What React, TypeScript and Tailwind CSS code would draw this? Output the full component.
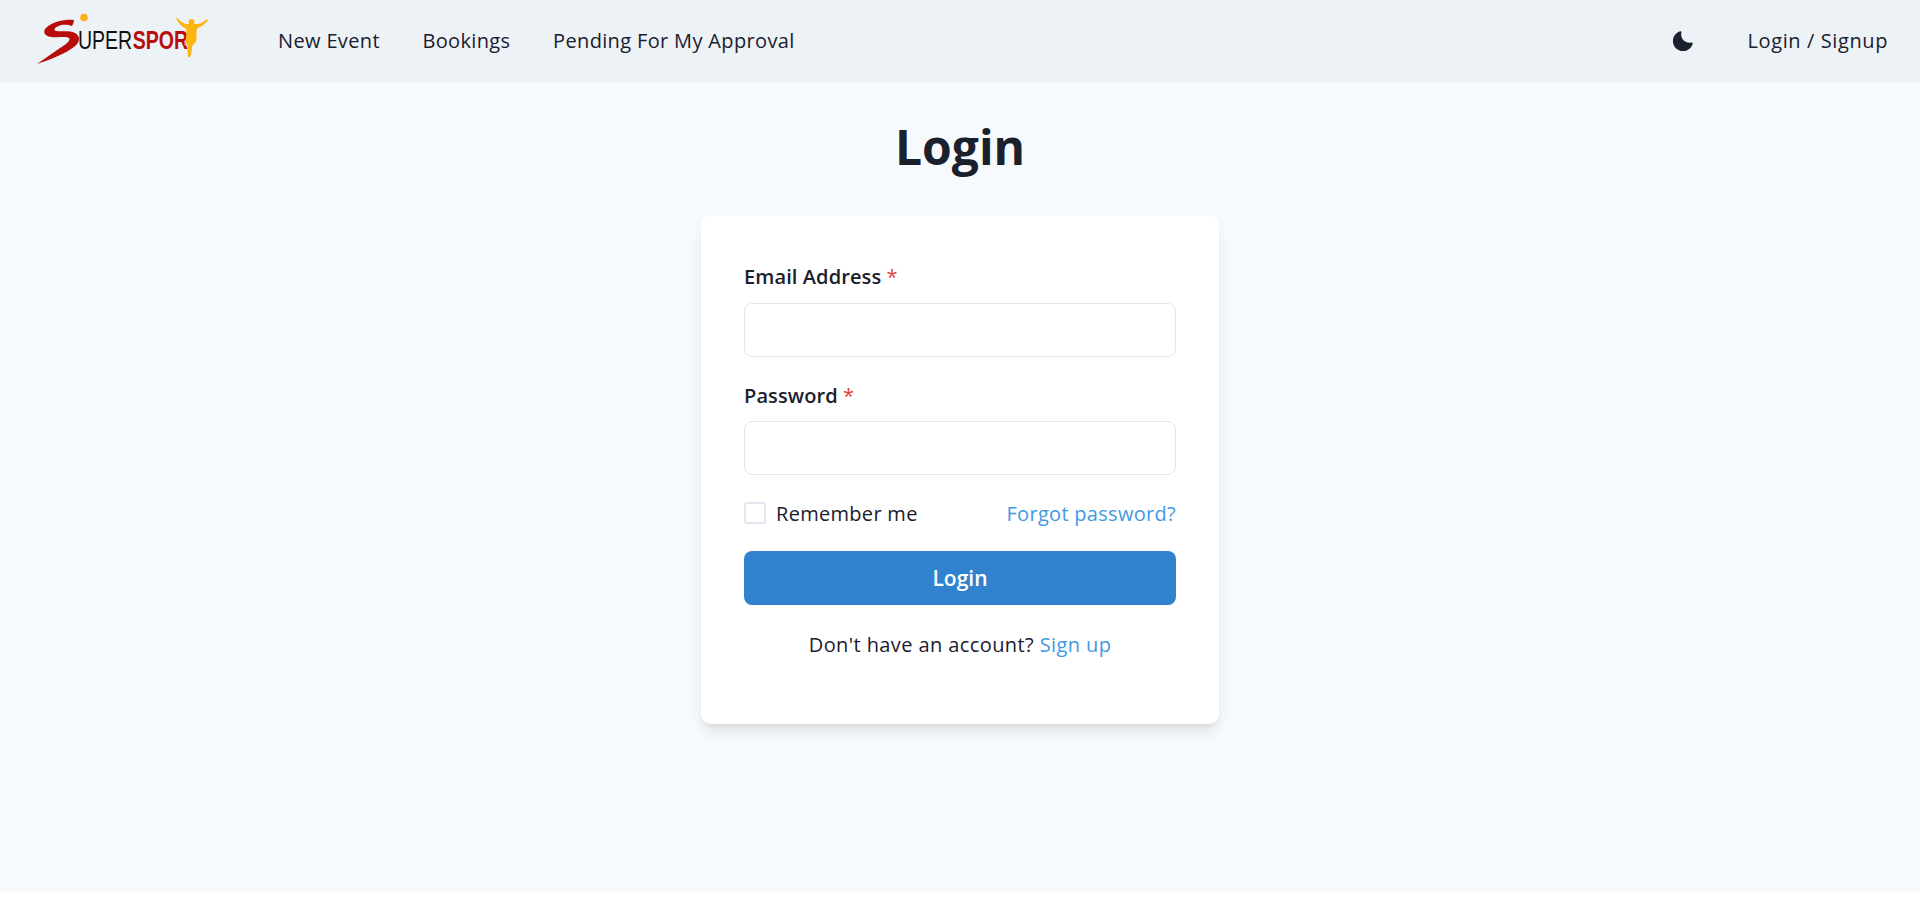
import React from 'react';

const navLinks = ['New Event', 'Bookings', 'Pending For My Approval'];

const Logo = () => (
  <svg width="212" height="82" viewBox="0 0 212 82" className="block shrink-0">
    <circle cx="84" cy="17.5" r="3.8" fill="#fbb116" />
    <path
      d="M74 20 C66 19 54 21 47 27 C42 31 44 36 51 37 C58 38 66 36 69 38 C71 40 67 44 60 48 L37 64 C50 60 66 53 74 47 C80 43 81 36 75 33 C69 30 60 32 56 31 C53 30 55 27 59 26 C63 24 68 25 72 26 C73 24 74 22 74 20 Z"
      fill="#b80d0d"
    />
    <g transform="translate(78 48.5) scale(0.75 1)" fontSize="26" fontFamily="'Liberation Sans', sans-serif">
      <text x="0" y="0" fill="#111111">UPER</text>
      <text x="73" y="0" fontWeight="700" fill="#b80d0d">SPOR</text>
    </g>
    <circle cx="191.5" cy="22" r="3" fill="#fdb50f" />
    <path
      d="M176 18 L178 18.5 C180 21 184 24 187 24 L196 24 C200 24 204 22 207 19 L208 20.5 C205 24 201 27 197 28.5 C196 33 197 38 196 42 C194 43 193 45 192 47 C192 51 191 55 190 57 L188 57 C187 52 188 47 187 43 C186 44 185 45 184 46 C186 39 187 33 186 28.5 C182 27 178 23 176 18 Z"
      fill="#fdb50f"
    />
  </svg>
);

const MoonIcon = () => (
  <svg viewBox="0 0 24 24" className="w-[22px] h-[22px] text-[#1a202c]">
    <path
      fill="currentColor"
      d="M21.4,13.7C20.6,13.9,19.8,14,19,14c-5,0-9-4-9-9c0-0.8,0.1-1.6,0.3-2.4c0.1-0.3,0-0.7-0.3-1 c-0.3-0.3-0.6-0.4-1-0.3C4.3,2.7,1,7.1,1,12c0,6.1,4.9,11,11,11c4.9,0,9.3-3.3,10.6-8.1c0.1-0.3,0-0.7-0.3-1 C22.1,13.7,21.7,13.6,21.4,13.7z"
    />
  </svg>
);

const Field = ({ label, type, className }: { label: string; type: string; className: string }) => (
  <div className={className}>
    <label className="block h-[30px] text-[20px] leading-[30px] tracking-[0.1px] font-[550] text-[#1a202c]">
      {label} <span className="font-medium text-[#e53e3e]">*</span>
    </label>
    <input
      type={type}
      className="block w-full h-[54px] rounded-lg border border-[#e2e8f0] bg-white px-4 outline-none"
    />
  </div>
);

export default function App() {
  return (
    <div className="bg-white font-['Open_Sans',sans-serif] text-[#1a202c]">
      <div className="h-[892px] bg-[#f7fafc]">
        <nav className="h-[82px] bg-[#edf2f7] flex items-center pr-[32px]">
          <Logo />
          <div className="flex items-center gap-[42.6px] ml-[66px] text-[20px] tracking-[0.35px]">
            {navLinks.map((label) => (
              <a key={label} href="#" className="whitespace-nowrap">
                {label}
              </a>
            ))}
          </div>
          <div className="ml-auto flex items-center gap-[54px] text-[20px] tracking-[0.6px]">
            <MoonIcon />
            <a href="#" className="whitespace-nowrap">Login / Signup</a>
          </div>
        </nav>

        <main className="flex flex-col items-center">
          <h1 className="mt-[29px] mb-[33px] h-[72px] text-[48px] leading-[72px] font-bold">Login</h1>
          <div className="w-[518px] h-[508px] rounded-[10px] bg-white px-[43px] pt-[46px] shadow-[0_10px_15px_-3px_rgba(0,0,0,0.1),0_4px_6px_-2px_rgba(0,0,0,0.05)]">
            <Field label="Email Address" type="email" className="flex flex-col gap-[11px]" />
            <Field label="Password" type="password" className="mt-[24px] flex flex-col gap-[10px]" />

            <div className="mt-[23px] h-[30px] flex items-center justify-between text-[20px] tracking-[0.3px]">
              <label className="flex items-center gap-[10px]">
                <input
                  type="checkbox"
                  className="appearance-none w-[22px] h-[22px] rounded-[3px] border-2 border-[#e2e8f0] bg-white"
                />
                <span className="pt-[2px]">Remember me</span>
              </label>
              <a href="#" className="pt-[2px] text-[#4299e1]">Forgot password?</a>
            </div>

            <button className="mt-[23px] block w-full h-[54px] pt-[2px] rounded-lg bg-[#3182ce] text-white text-[21px] font-semibold">
              Login
            </button>

            <p className="mt-[25px] h-[30px] text-center text-[20px] leading-[30px] tracking-[0.4px]">
              Don't have an account? <a href="#" className="text-[#4299e1]">Sign up</a>
            </p>
          </div>
        </main>
      </div>
      <div className="h-[18px]" />
    </div>
  );
}
